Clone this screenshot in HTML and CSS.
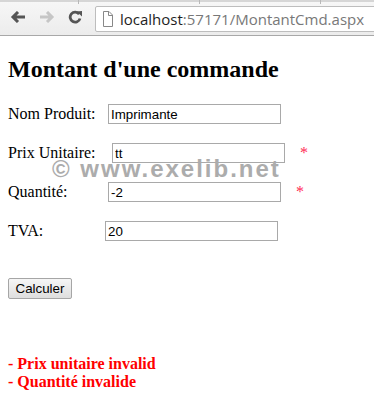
FILE: index.html
```html
<!DOCTYPE html>
<html lang="fr">
<head>
    <meta charset="UTF-8">
    <title>Montant d'une commande</title>
    <link rel="stylesheet" href="styles.css">
</head>
<body>
    <!-- barre du navigateur -->
    <div class="chrome">
        <div class="tabstrip"><span></span><span></span><span></span></div>
        <div class="toolbar">
            <span class="nav-btn">
                <svg width="16" height="12" viewBox="0 0 16 12"><path d="M3 6H15M8 1L3 6L8 11" fill="none" stroke="#555" stroke-width="3"/></svg>
            </span>
            <span class="nav-btn">
                <svg width="16" height="12" viewBox="0 0 16 12"><path d="M1 6H13M8 1L13 6L8 11" fill="none" stroke="#c6c6c6" stroke-width="3"/></svg>
            </span>
            <span class="nav-btn nav-reload">
                <svg width="15" height="14" viewBox="0 0 15 14"><path d="M11.2 4.2A5 5 0 1 0 12 8.5" fill="none" stroke="#555" stroke-width="2.8"/><path d="M8.5 1.5L14 1V6.5Z" fill="#555"/></svg>
            </span>
            <div class="omnibox">
                <svg class="page-icon" width="11" height="16" viewBox="0 0 11 16"><path d="M1.5 .5H7L10.5 4V15.5H1.5Z" fill="#fff" stroke="#888"/><path d="M6.5 .5V4.5H10.5" fill="none" stroke="#888"/></svg>
                <span class="host">localhost</span><span class="path">:57171/MontantCmd.aspx</span>
            </div>
        </div>
    </div>

    <div class="page">
        <h2>Montant d'une commande</h2>

        <form class="form">
            <div class="row">
                <label class="lbl lbl-nom">Nom Produit:</label>
                <input class="field" type="text" value="Imprimante">
            </div>
            <div class="row">
                <label class="lbl lbl-prix">Prix Unitaire:</label>
                <input class="field" type="text" value="tt">
                <span class="star">*</span>
            </div>
            <div class="row">
                <label class="lbl lbl-qte">Quantité:</label>
                <input class="field" type="text" value="-2">
                <span class="star">*</span>
            </div>
            <div class="row">
                <label class="lbl lbl-tva">TVA:</label>
                <input class="field" type="text" value="20">
            </div>
            <button class="btn" type="button">Calculer</button>
        </form>

        <div class="errors">
            - Prix unitaire invalid<br>
            - Quantité invalide
        </div>

        <div class="watermark">© www.exelib.net</div>
    </div>
</body>
</html>
```

FILE: styles.css
```css
body {
    margin: 0;
    font-family: "Liberation Serif", "Times New Roman", serif;
    font-size: 16px;
    color: #000;
    background: #fff;
}

/* barre du navigateur */
.chrome {
    height: 35px;
    border-bottom: 1px solid #a8a8a8;
    background: linear-gradient(#f7f7f7, #ececec);
    overflow: hidden;
}
.tabstrip {
    height: 2px;
    background: #d6d6d6;
    display: flex;
    gap: 120px;
    padding-left: 78px;
}
.tabstrip span {
    width: 1px;
    height: 4px;
    background: #b8b8b8;
}
.toolbar {
    display: flex;
    align-items: center;
    height: 30px;
    padding-left: 10px;
}
.nav-btn {
    flex: none;
    width: 29px;
    display: flex;
    align-items: center;
}
.nav-reload {
    width: 26px;
}
.omnibox {
    margin-left: 1px;
    margin-top: 4px;
    flex: none;
    width: 300px;
    height: 24px;
    border: 1px solid #bdbdbd;
    border-radius: 2px;
    background: #fff;
    display: flex;
    align-items: center;
    padding-left: 6px;
    font-family: "Open Sans", "DejaVu Sans", sans-serif;
    font-size: 15px;
    white-space: nowrap;
}
.page-icon {
    flex: none;
    margin-right: 7px;
}
.host {
    color: #1e1e1e;
}
.path {
    color: #787878;
}

/* contenu */
.page {
    position: relative;
    padding: 0 8px;
}
h2 {
    font-size: 24px;
    margin: 20px 0;
}
.row {
    display: flex;
    align-items: center;
    height: 22px;
    margin-bottom: 17px;
}
.lbl-nom { width: 100px; }
.lbl-prix { width: 104px; }
.lbl-qte { width: 100px; }
.lbl-tva { width: 97px; }
.field {
    box-sizing: border-box;
    width: 173px;
    height: 20px;
    margin: 0;
    padding: 1px 2px;
    border: 1px solid #a9a9a9;
    font-family: "Liberation Sans", Arial, sans-serif;
    font-size: 13.33px;
    color: #000;
}
.star {
    color: #ff2a55;
    margin-left: 15px;
}
.btn {
    display: block;
    margin-top: 36px;
    box-sizing: border-box;
    width: 64px;
    height: 21px;
    padding: 0;
    border: 1px solid #a6a6a6;
    border-radius: 2px;
    background: linear-gradient(#f6f6f6, #dedede);
    font-family: "Liberation Sans", Arial, sans-serif;
    font-size: 13.33px;
    color: #000;
}
.errors {
    margin-top: 56px;
    color: #ff0000;
    font-weight: bold;
    line-height: 18px;
}
.watermark {
    position: absolute;
    left: 52px;
    top: 99px;
    font-family: "Liberation Sans", Arial, sans-serif;
    font-weight: bold;
    font-size: 24px;
    letter-spacing: 2px;
    color: #acacac;
    white-space: nowrap;
}
```
